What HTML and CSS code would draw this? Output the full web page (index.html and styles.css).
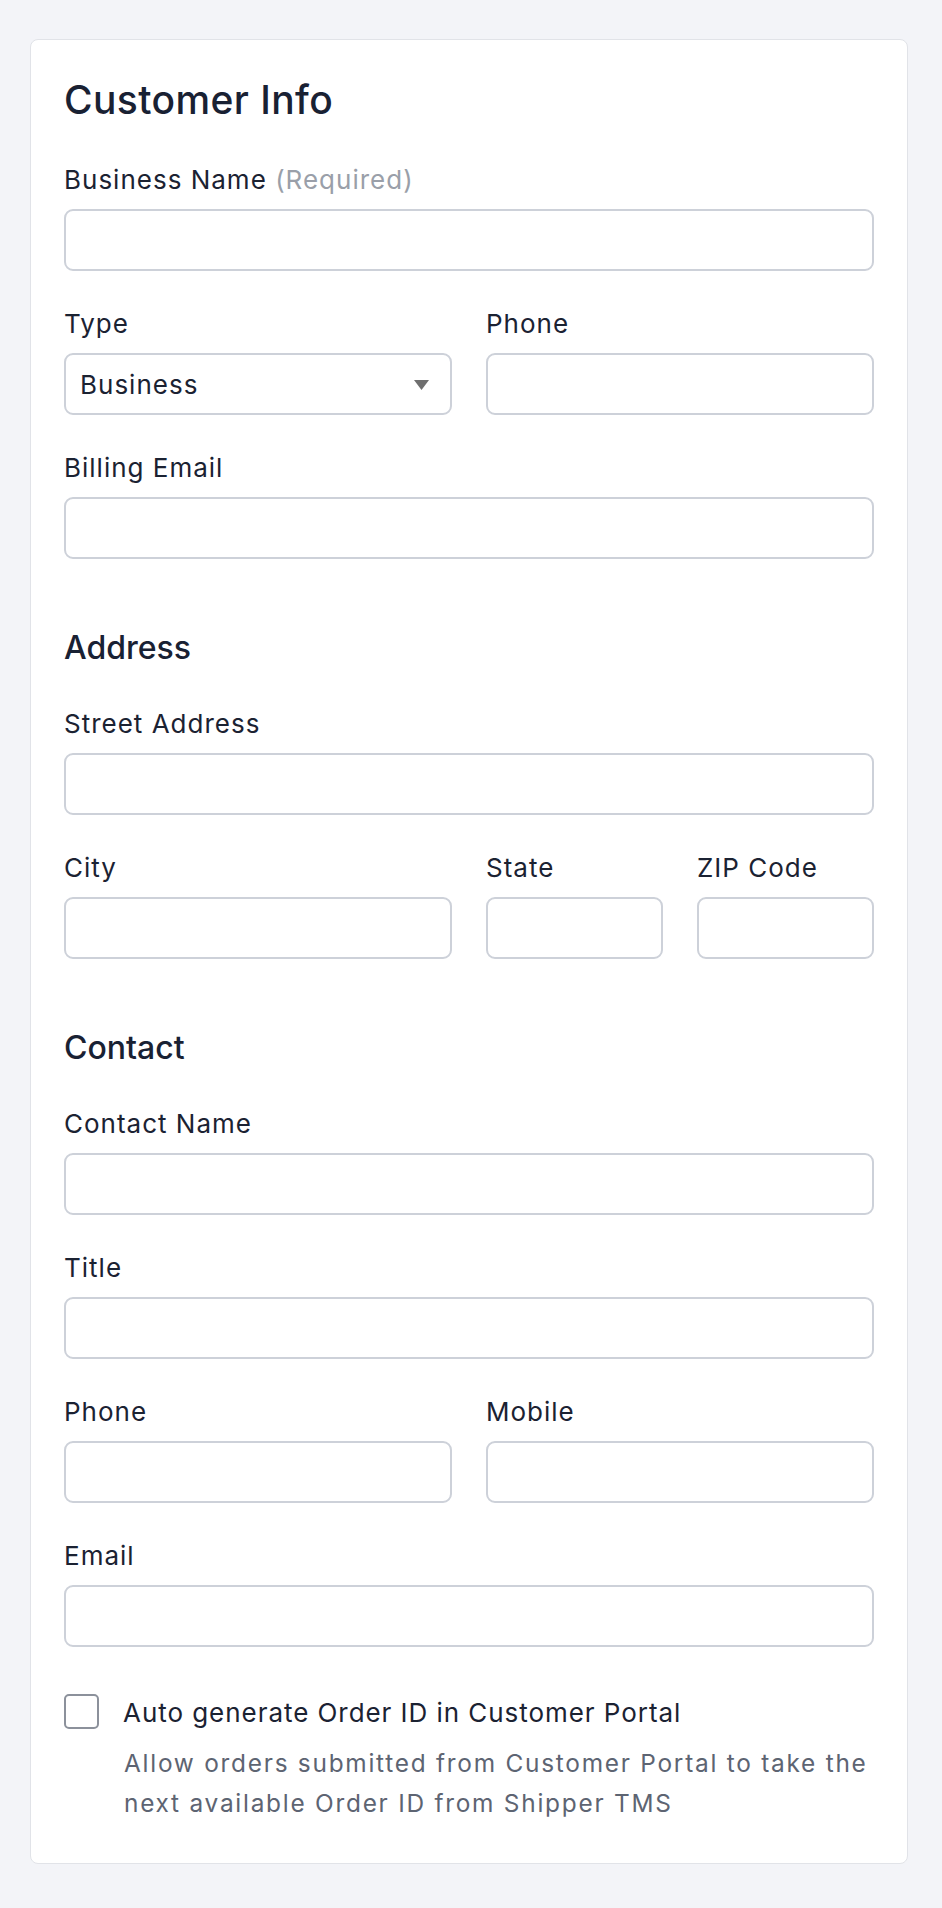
FILE: index.html
```html
<!DOCTYPE html>
<html lang="en">
<head>
<meta charset="utf-8">
<title>Customer Info</title>
<link rel="stylesheet" href="styles.css">
</head>
<body>
<div class="card">
  <h1 class="title">Customer Info</h1>

  <div class="grid">
    <div class="field span4">
      <label class="label">Business Name <span class="req">(Required)</span></label>
      <input class="input" type="text">
    </div>
    <div class="field span2">
      <label class="label">Type</label>
      <div class="select"><span>Business</span><svg class="caret" width="15" height="10" viewBox="0 0 15 10"><path d="M0 0 H15 L7.5 10 Z" fill="#6f6f6f"/></svg></div>
    </div>
    <div class="field span2">
      <label class="label">Phone</label>
      <input class="input" type="text">
    </div>
    <div class="field span4">
      <label class="label">Billing Email</label>
      <input class="input" type="text">
    </div>
  </div>

  <h2 class="heading">Address</h2>
  <div class="grid">
    <div class="field span4">
      <label class="label">Street Address</label>
      <input class="input" type="text">
    </div>
    <div class="field span2">
      <label class="label">City</label>
      <input class="input" type="text">
    </div>
    <div class="field span1">
      <label class="label">State</label>
      <input class="input" type="text">
    </div>
    <div class="field span1">
      <label class="label">ZIP Code</label>
      <input class="input" type="text">
    </div>
  </div>

  <h2 class="heading">Contact</h2>
  <div class="grid">
    <div class="field span4">
      <label class="label">Contact Name</label>
      <input class="input" type="text">
    </div>
    <div class="field span4">
      <label class="label">Title</label>
      <input class="input" type="text">
    </div>
    <div class="field span2">
      <label class="label">Phone</label>
      <input class="input" type="text">
    </div>
    <div class="field span2">
      <label class="label">Mobile</label>
      <input class="input" type="text">
    </div>
    <div class="field span4">
      <label class="label">Email</label>
      <input class="input" type="text">
    </div>
  </div>

  <div class="check-row">
    <span class="checkbox"></span>
    <div class="check-text">
      <div class="check-label">Auto generate Order ID in Customer Portal</div>
      <div class="check-desc">Allow orders submitted from Customer Portal to take the<br>next available Order ID from Shipper TMS</div>
    </div>
  </div>
</div>
</body>
</html>
```
FILE: styles.css
```css
* { box-sizing: border-box; }

html, body {
  margin: 0;
  padding: 0;
}

body {
  background: #f3f4f8;
  font-family: Inter, "Noto Sans", "Liberation Sans", sans-serif;
  color: #1b2232;
  padding: 39px 34px 44px 30px;
}

.card {
  width: 878px;
  background: #ffffff;
  border: 1px solid #e1e3e8;
  border-radius: 8px;
  padding: 34px 33px 40px 33px;
}

.title {
  margin: 0 0 34px 0;
  font-size: 39px;
  line-height: 52px;
  font-weight: 500;
  letter-spacing: 0.4px;
  color: #192133;
}

.heading {
  margin: 66px 0 34px 0;
  font-size: 32px;
  line-height: 45px;
  font-weight: 500;
  letter-spacing: 0;
  color: #192133;
}

.grid {
  display: grid;
  grid-template-columns: repeat(4, 1fr);
  column-gap: 34px;
  row-gap: 33px;
}

.span4 { grid-column: span 4; }
.span2 { grid-column: span 2; }
.span1 { grid-column: span 1; }

.field {
  display: flex;
  flex-direction: column;
  min-width: 0;
}

.label {
  display: block;
  font-size: 26px;
  line-height: 39px;
  font-weight: 400;
  letter-spacing: 1px;
  color: #1b2232;
  margin-bottom: 10px;
}

.req {
  color: #9a9fa9;
}

.input {
  display: block;
  width: 100%;
  height: 62px;
  border: 2px solid #cdd1d9;
  border-radius: 9px;
  background: #ffffff;
  font-family: inherit;
  font-size: 26px;
  padding: 0 16px;
  outline: none;
  margin: 0;
}

.select {
  display: flex;
  align-items: center;
  justify-content: space-between;
  height: 62px;
  border: 2px solid #cdd1d9;
  border-radius: 9px;
  padding: 0 21px 0 14px;
  font-size: 26px;
  letter-spacing: 1px;
  color: #1b2232;
}

.caret {
  display: block;
  margin-top: 2px;
}

.check-row {
  display: flex;
  align-items: flex-start;
  gap: 24px;
  margin-top: 46px;
}

.checkbox {
  flex: none;
  width: 35px;
  height: 35px;
  margin-top: 1px;
  border: 2px solid #8c919b;
  border-radius: 5px;
  background: #ffffff;
}

.check-text {
  display: flex;
  flex-direction: column;
  gap: 12px;
}

.check-label {
  font-size: 26px;
  line-height: 39px;
  letter-spacing: 0.95px;
  color: #1b2232;
}

.check-desc {
  font-size: 24.4px;
  line-height: 39.6px;
  letter-spacing: 1.75px;
  color: #5d6472;
  padding-left: 1px;
}
```
